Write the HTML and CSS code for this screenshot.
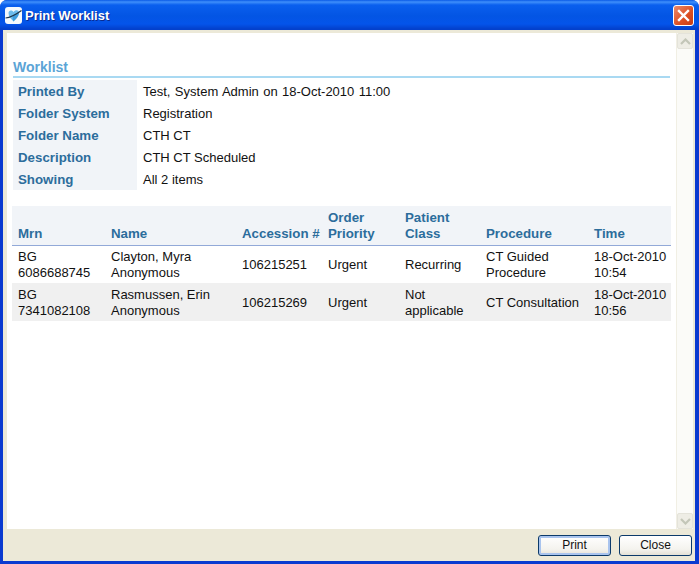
FILE: index.html
```html
<!DOCTYPE html>
<html lang="en">
<head>
    <meta charset="UTF-8">
    <title>Print Worklist</title>
    <link rel="stylesheet" href="styles.css">
</head>
<body>
<div class="window">
    <div class="titlebar">
        <svg class="app-icon" width="17" height="17" viewBox="0 0 17 17">
            <rect x="0" y="0" width="17" height="17" rx="3" fill="#f4f9fd"/>
            <path d="M8.500 14.500C6 12 3.500 9.500 3.500 6 3.500 3.500 6.500 2.500 8.500 5 10 2.500 14 2.500 14 5.500 14 9 11 12 8.500 14.500z" fill="#6cbcec"/>
            <path d="M8.500 14.500C7 12 7.500 9 9 7.500 11 7.500 14 6 14 5.500 14 9 11 12 8.500 14.500z" fill="#3f9ddc"/>
            <path d="M0.500 11C6 10.500 11 7.500 16.500 3.500" fill="none" stroke="#1c3448" stroke-width="1.200"/>
        </svg>
        <span class="title">Print Worklist</span>
        <div class="close-btn">
            <svg width="13" height="13" viewBox="0 0 13 13">
                <path d="M2 2l9 9M11 2l-9 9" stroke="#fff" stroke-width="2.4" stroke-linecap="square"/>
            </svg>
        </div>
    </div>
    <div class="client">
        <div class="main">
            <div class="content">
                <h2 class="section">Worklist</h2>
                <table class="info">
                    <tr class="printed"><th>Printed By</th><td>Test, System Admin on 18-Oct-2010 11:00</td></tr>
                    <tr><th>Folder System</th><td>Registration</td></tr>
                    <tr><th>Folder Name</th><td>CTH CT</td></tr>
                    <tr><th>Description</th><td>CTH CT Scheduled</td></tr>
                    <tr><th>Showing</th><td>All 2 items</td></tr>
                </table>
                <table class="items">
                    <colgroup>
                        <col class="c-mrn"><col class="c-name"><col class="c-acc"><col class="c-pri">
                        <col class="c-cls"><col class="c-proc"><col class="c-time">
                    </colgroup>
                    <thead>
                        <tr>
                            <th>Mrn</th><th>Name</th><th>Accession #</th><th>Order<br>Priority</th>
                            <th>Patient<br>Class</th><th>Procedure</th><th>Time</th>
                        </tr>
                    </thead>
                    <tbody>
                        <tr>
                            <td>BG<br>6086688745</td><td>Clayton, Myra<br>Anonymous</td><td>106215251</td><td>Urgent</td>
                            <td>Recurring</td><td>CT Guided<br>Procedure</td><td>18-Oct-2010<br>10:54</td>
                        </tr>
                        <tr class="alt">
                            <td>BG<br>7341082108</td><td>Rasmussen, Erin<br>Anonymous</td><td>106215269</td><td>Urgent</td>
                            <td>Not<br>applicable</td><td>CT Consultation</td><td>18-Oct-2010<br>10:56</td>
                        </tr>
                    </tbody>
                </table>
            </div>
            <div class="scrollbar">
                <div class="arrow">
                    <svg width="11" height="7" viewBox="0 0 11 7"><path d="M1 6l4.500-4.500L10 6" fill="none" stroke="#c3c6b8" stroke-width="2.200"/></svg>
                </div>
                <div class="arrow">
                    <svg width="11" height="7" viewBox="0 0 11 7"><path d="M1 1l4.500 4.500L10 1" fill="none" stroke="#c3c6b8" stroke-width="2.200"/></svg>
                </div>
            </div>
        </div>
        <div class="footer">
            <button class="btn btn-default">Print</button>
            <button class="btn">Close</button>
        </div>
    </div>
</div>
</body>
</html>
```

FILE: styles.css
```css
html, body {
    margin: 0;
    height: 100%;
}
body {
    font-family: "Liberation Sans", Arial, sans-serif;
    font-size: 13px;
    color: #111;
    overflow: hidden;
}
.window {
    height: 564px;
    display: flex;
    flex-direction: column;
    background: #0a3ad0;
    border-radius: 7px 7px 0 0;
}
.titlebar {
    height: 30px;
    flex: none;
    display: flex;
    align-items: center;
    padding: 0 5px;
    background: linear-gradient(#0a5ae6 0, #3f8ffb 2px, #0a5fee 5px, #0355e4 16px, #0454ea 24px, #0340cc 29px);
    border-radius: 7px 7px 0 0;
}
.app-icon {
    margin-right: 3px;
}
.title {
    flex: 1;
    color: #fff;
    font-size: 13px;
    font-weight: bold;
    text-shadow: 1px 1px 0 #0a2a90;
}
.close-btn {
    width: 19px;
    height: 19px;
    border: 1px solid #fff;
    border-radius: 3px;
    background: linear-gradient(135deg, #ea8a6c, #dc4e22 60%, #c83c14);
    display: flex;
    align-items: center;
    justify-content: center;
}
.client {
    flex: 1;
    display: flex;
    flex-direction: column;
    margin: 0 4px 3px 3px;
    background: #ece9d8;
    min-height: 0;
}
.main {
    flex: 1;
    display: flex;
    margin: 3px 2px 0 4px;
    background: #fff;
    min-height: 0;
}
.content {
    flex: 1;
    padding: 26px 6px 0 5px;
    min-width: 0;
}
.section {
    margin: 0 0 2px 1px;
    padding: 0 0 1px;
    height: 16px;
    line-height: 17px;
    font-size: 14px;
    font-weight: bold;
    color: #5ba4d6;
    border-bottom: 2px solid #a9d9f2;
}
.info {
    border-collapse: collapse;
    margin-left: 1px;
}
.info th {
    width: 114px;
    height: 22px;
    padding: 0 5px;
    text-align: left;
    font-size: 13.3px;
    color: #2c6d9c;
    background: #f1f4f8;
}
.info td {
    height: 22px;
    padding: 0 6px;
}
.printed td {
    word-spacing: 0.8px;
}
.items {
    width: 659px;
    margin-top: 16px;
    border-collapse: collapse;
    table-layout: fixed;
}
.c-mrn { width: 93px; }
.c-name { width: 131px; }
.c-acc { width: 86px; }
.c-pri { width: 77px; }
.c-cls { width: 81px; }
.c-proc { width: 108px; }
.items thead th {
    height: 39px;
    padding: 0 0 3px 6px;
    box-sizing: border-box;
    vertical-align: bottom;
    text-align: left;
    font-size: 13.3px;
    line-height: 16px;
    white-space: nowrap;
    color: #2c6d9c;
    background: #f1f4f8;
    border-bottom: 1px solid #92a9d8;
}
.items td {
    height: 38px;
    padding: 1px 0 0 6px;
    box-sizing: border-box;
    line-height: 16px;
}
.alt td {
    background: #f0f0f0;
}
.scrollbar {
    width: 16px;
    flex: none;
    display: flex;
    flex-direction: column;
    justify-content: space-between;
    background: #fbfbf8;
    border-left: 1px solid #f1efe4;
}
.arrow {
    height: 16px;
    display: flex;
    align-items: center;
    justify-content: center;
    background: #eeede5;
    border: 1px solid #e4e3da;
    border-radius: 2px;
    box-sizing: border-box;
}
.footer {
    height: 32px;
    flex: none;
    display: flex;
    justify-content: flex-end;
    align-items: center;
    gap: 8px;
    padding-right: 3px;
}
.btn {
    width: 73px;
    height: 21px;
    padding: 0;
    font-family: "Liberation Sans", Arial, sans-serif;
    font-size: 12px;
    color: #111;
    border: 1px solid #0c3a6a;
    border-radius: 3px;
    background: linear-gradient(#fff, #f4f3ee 70%, #e4e1d6);
}
.btn-default {
    box-shadow: inset 0 0 0 2px #a9c4ee;
}
```
